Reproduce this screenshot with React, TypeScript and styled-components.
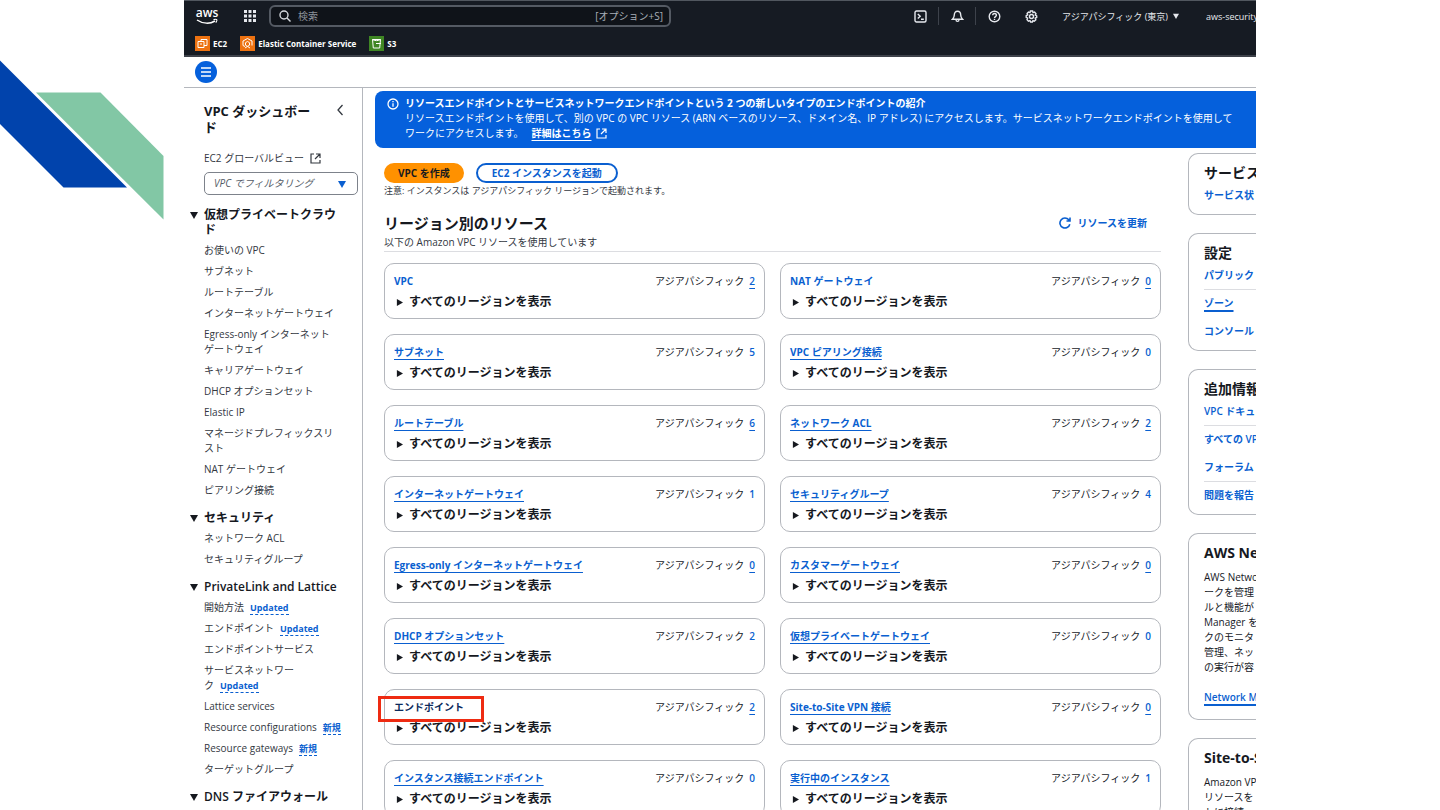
import React from "react";
import styled, { createGlobalStyle } from "styled-components";

const color = {
  ink: "#16191f",
  text: "#33383f",
  link: "#0a5fd0",
  nav: "#161b23",
  line: "#b4b7bd",
  soft: "#dcdde1",
};

const GlobalStyle = createGlobalStyle`
  *, *::before, *::after { box-sizing: border-box; }
  body {
    margin: 0;
    background: #fff;
    color: ${color.ink};
    font-family: "Open Sans", "Noto Sans CJK JP", sans-serif;
    font-size: 10px;
    line-height: 15px;
  }
  button, input, select { font: inherit; color: inherit; }
  button { cursor: pointer; }
  ul { list-style: none; margin: 0; padding: 0; }
  h1, h2, h3, p { margin: 0; }
  svg { display: block; flex: none; }
`;

/* ---------- slide ---------- */

const Slide = styled.div`
  display: grid;
  grid-template-columns: 184px minmax(0, 1fr) 184px;
  height: 100vh;
  overflow: hidden;
`;

const Console = styled.div`
  display: flex;
  flex-direction: column;
  min-width: 0;
  overflow: hidden;
`;

/* ---------- top navigation ---------- */

const TopNav = styled.header`
  background: ${color.nav};
  border-top: 1px solid #51575f;
  border-bottom: 2px solid #3d4149;
  color: #fff;
  flex: none;
`;

const NavRow = styled.div`
  display: flex;
  align-items: center;
  height: 30px;
  padding-left: 11px;
`;

const LogoLink = styled.a`
  color: #fff;
`;

const IconButton = styled.button`
  display: flex;
  align-items: center;
  justify-content: center;
  padding: 0;
  border: 0;
  background: none;
  color: #e6e9ee;
`;

const AppsButton = styled(IconButton)`
  margin: 0 13px 0 25px;
`;

const SearchBox = styled.label`
  display: flex;
  align-items: center;
  gap: 7px;
  flex: 0 1 402px;
  min-width: 0;
  height: 22px;
  padding: 0 6px 0 8px;
  border: 2px solid #545a63;
  border-radius: 6px;
  background: #0f1319;
  color: #a9afb8;
`;

const SearchInput = styled.input`
  flex: 1;
  min-width: 0;
  padding: 0;
  border: 0;
  outline: 0;
  background: none;
  &::placeholder { color: #8b919a; opacity: 1; }
`;

const NavTools = styled.div`
  display: flex;
  align-items: center;
  margin-left: auto;
  flex: none;
`;

const ToolCell = styled.div<{ $divided?: boolean }>`
  display: flex;
  justify-content: center;
  width: 37px;
  height: 18px;
  border-right: 1px solid ${(p) => (p.$divided ? "#3d424b" : "transparent")};
`;

const RegionButton = styled(IconButton)`
  margin-left: 12px;
  gap: 5px;
  font-size: 9px;
`;

const AccountButton = styled(IconButton)`
  justify-content: flex-start;
  width: 50px;
  margin-left: 27px;
  font-size: 9px;
  overflow: hidden;
  white-space: nowrap;
`;

const Favorites = styled.nav`
  display: flex;
  align-items: center;
  gap: 13px;
  height: 24px;
  padding-left: 11px;
`;

const Favorite = styled.a`
  display: flex;
  align-items: center;
  gap: 3px;
  color: #fff;
  font-size: 8px;
  font-weight: 700;
  text-decoration: none;
`;

const ToggleBar = styled.div`
  display: flex;
  align-items: center;
  flex: none;
  height: 31px;
  padding-left: 11px;
  border-bottom: 1px solid ${color.line};
`;

const MenuButton = styled(IconButton)`
  width: 22px;
  height: 22px;
  border-radius: 50%;
  background: #0560dc;
  color: #fff;
`;

const Body = styled.div`
  display: grid;
  grid-template-columns: 179px minmax(0, 1fr);
  flex: 1;
  min-height: 0;
`;

/* ---------- side navigation ---------- */

const SideNav = styled.nav`
  border-right: 1px solid ${color.line};
  padding: 15px 4px 0 20px;
  overflow: hidden;
`;

const SideHead = styled.div`
  display: flex;
  justify-content: space-between;
  align-items: flex-start;
  padding-right: 14px;
`;

const SideTitle = styled.h1`
  width: 116px;
  font-size: 13px;
  line-height: 16px;
  font-weight: 700;
`;

const GlobalView = styled.a`
  display: flex;
  align-items: center;
  gap: 6px;
  margin-top: 16px;
  color: ${color.text};
  text-decoration: none;
`;

const FilterBox = styled.div`
  display: grid;
  align-items: center;
  margin-top: 6px;
  color: ${color.link};
  & > * { grid-area: 1 / 1; }
  & > svg { justify-self: end; margin-right: 12px; pointer-events: none; }
`;

const FilterSelect = styled.select`
  appearance: none;
  width: 100%;
  height: 23px;
  padding: 0 24px 0 9px;
  border: 1px solid #7d828b;
  border-radius: 5px;
  background: #fff;
  color: #545b66;
  font-style: italic;
`;

const NavSection = styled.section`
  margin-top: 12px;
`;

const SectionButton = styled.button`
  display: flex;
  align-items: baseline;
  gap: 6px;
  margin-left: -14px;
  width: 150px;
  padding: 0;
  border: 0;
  background: none;
  text-align: left;
  font-size: 12px;
  line-height: 15px;
  font-weight: 600;
`;

const NavList = styled.ul`
  display: flex;
  flex-direction: column;
  gap: 6px;
  width: 136px;
  margin-top: 6px;
`;

const NavItem = styled.a<{ $single?: boolean }>`
  display: block;
  color: ${color.text};
  text-decoration: none;
  white-space: ${(p) => (p.$single ? "nowrap" : "normal")};
`;

const KeepTogether = styled.span`
  white-space: nowrap;
`;

const Badge = styled.span`
  margin-left: 6px;
  border-bottom: 1px dashed ${color.link};
  color: ${color.link};
  font-size: 9px;
  line-height: 10px;
  font-weight: 700;
`;

/* ---------- main ---------- */

const Content = styled.div`
  padding-top: 3px;
  min-width: 0;
  overflow: hidden;
`;

const Banner = styled.section`
  display: flex;
  gap: 6px;
  margin-left: 12px;
  padding: 5px 0 7px 12px;
  border-radius: 8px 0 0 8px;
  background: #0560dc;
  color: #fff;
  white-space: nowrap;
  overflow: hidden;
  & > svg { margin-top: 2px; }
`;

const BannerTitle = styled.h2`
  font-size: 10px;
  line-height: 15px;
  font-weight: 700;
`;

const BannerLine = styled.p`
  display: flex;
  align-items: center;
  gap: 4px;
`;

const BannerLink = styled.a`
  margin-left: 4px;
  color: #fff;
  font-weight: 600;
  text-underline-offset: 3px;
`;

const Columns = styled.div`
  display: flex;
  gap: 27px;
  padding-left: 21px;
`;

const Main = styled.main`
  flex: 1;
  min-width: 0;
  padding-top: 15px;
`;

const Actions = styled.div`
  display: flex;
  gap: 12px;
`;

const PillButton = styled.button<{ $primary?: boolean }>`
  height: 20px;
  padding: 0 ${(p) => (p.$primary ? 12 : 14)}px;
  border: 2px solid ${(p) => (p.$primary ? "#ff9100" : color.link)};
  border-radius: 10px;
  background: ${(p) => (p.$primary ? "#ff9100" : "#fff")};
  color: ${(p) => (p.$primary ? color.ink : color.link)};
  line-height: 15px;
  font-weight: 700;
`;

const Note = styled.p`
  color: ${color.text};
  font-size: 9px;
`;

const ResourcesHead = styled.div`
  display: flex;
  justify-content: space-between;
  align-items: flex-start;
  margin-top: 15px;
  padding: 0 14px 1px 0;
  border-bottom: 1px solid ${color.soft};
`;

const ResourcesTitle = styled.h2`
  font-size: 15px;
  line-height: 20px;
  font-weight: 600;
`;

const ResourcesSub = styled.p`
  margin-top: 2px;
  color: ${color.text};
`;

const RefreshButton = styled(IconButton)`
  gap: 7px;
  height: 20px;
  color: ${color.link};
  font-weight: 700;
`;

const CardGrid = styled.div`
  display: grid;
  grid-template-columns: repeat(2, minmax(0, 1fr));
  gap: 15px;
  margin-top: 11px;
`;

const Card = styled.article`
  position: relative;
  padding: 10px 9px 8px;
  border: 1px solid ${color.line};
  border-radius: 10px;
`;

const CardRow = styled.div`
  display: flex;
  justify-content: space-between;
`;

const CardLink = styled.a<{ $underlined?: boolean; $visited?: boolean }>`
  color: ${(p) => (p.$visited ? "#0b2a5c" : color.link)};
  font-weight: 700;
  text-decoration: ${(p) => (p.$underlined ? "underline" : "none")};
  text-underline-offset: 3px;
`;

const CountLink = styled.a<{ $underlined?: boolean }>`
  margin-left: 5px;
  color: ${color.link};
  font-weight: 600;
  text-decoration: ${(p) => (p.$underlined ? "underline" : "none")};
  text-underline-offset: 3px;
`;

const ExpandButton = styled.button`
  display: flex;
  align-items: center;
  gap: 6px;
  margin-top: 5px;
  padding: 0 0 0 2px;
  border: 0;
  background: none;
  font-size: 12px;
  line-height: 16px;
  font-weight: 600;
`;

const Highlight = styled.div`
  position: absolute;
  top: 6px;
  left: -7px;
  width: 106px;
  height: 26px;
  border: 3px solid #ee2b12;
  pointer-events: none;
`;

/* ---------- right column ---------- */

const Aside = styled.aside`
  display: flex;
  flex-direction: column;
  gap: 18px;
  flex: none;
  width: 68px;
  padding-top: 5px;
  overflow: hidden;
  white-space: nowrap;
`;

const Panel = styled.section<{ $prose?: boolean }>`
  flex: none;
  padding: 10px 0 ${(p) => (p.$prose ? 14 : 5)}px 15px;
  border: 1px solid ${color.line};
  border-right: 0;
  border-radius: 10px 0 0 10px;
`;

const PanelTitle = styled.h3`
  font-size: 14px;
  line-height: 18px;
  font-weight: 700;
`;

const PanelItem = styled.li<{ $ruled?: boolean }>`
  padding: 6px 0;
  border-bottom: 1px solid ${(p) => (p.$ruled ? color.soft : "transparent")};
  &:last-child { border-bottom: 0; }
`;

const PanelLink = styled.a<{ $underlined?: boolean }>`
  color: ${color.link};
  font-weight: 600;
  text-decoration: ${(p) => (p.$underlined ? "underline" : "none")};
  text-decoration-thickness: 2px;
  text-underline-offset: 3px;
`;

const PanelText = styled.p`
  margin: 8px 0 15px;
  white-space: pre;
`;

/* ---------- icons ---------- */

const Triangle = ({ dir, size = 8 }: { dir: "down" | "right"; size?: number }) => (
  <svg width={size} height={size} viewBox="0 0 8 8" fill="currentColor" aria-hidden>
    <path d={dir === "down" ? "M0 1h8L4 8z" : "M1 0v8l7-4z"} />
  </svg>
);

const ExternalIcon = () => (
  <svg width="11" height="11" viewBox="0 0 11 11" fill="none" stroke="currentColor" strokeWidth="1.2" aria-hidden>
    <path d="M4 1H1v9h9V7M6 1h4v4M10 1 5 6" />
  </svg>
);

const AwsLogo = () => (
  <svg width="24" height="20" viewBox="0 0 24 20" role="img" aria-label="AWS" overflow="visible">
    <text x="12" y="11" textAnchor="middle" fontSize="12" fontWeight="600" fill="#fff">
      aws
    </text>
    <path d="M2 14c6 4 13 4 18 1" fill="none" stroke="#fff" strokeWidth="1.5" />
    <path d="M18.500 13.600c1.500-.4 3-.4 3.300 0s-.3 2-1 3" fill="none" stroke="#fff" strokeWidth="1.1" />
  </svg>
);

const AppsIcon = () => (
  <svg width="12" height="12" viewBox="0 0 12 12" fill="currentColor" aria-hidden>
    {[0, 4.5, 9].map((y) =>
      [0, 4.5, 9].map((x) => <rect key={`${x}-${y}`} x={x} y={y} width="3" height="3" />)
    )}
  </svg>
);

const SearchIcon = () => (
  <svg width="12" height="12" viewBox="0 0 12 12" fill="none" stroke="#d5d9de" strokeWidth="1.4" aria-hidden>
    <circle cx="5" cy="5" r="4" />
    <path d="m8 8 3.500 3.500" />
  </svg>
);

const toolIcons: Record<string, React.ReactNode> = {
  CloudShell: (
    <>
      <rect x="1" y="1" width="11" height="11" rx="1.5" />
      <path d="m3.800 4 2.400 2.300-2.400 2.300M7 9.300h2.800" />
    </>
  ),
  通知: <path d="M6.500 1.200C4.300 1.200 3.300 3 3.300 5c0 2-.6 2.900-1.800 4.200h10C10.300 7.900 9.700 7 9.700 5c0-2-1-3.800-3.200-3.800zM5 9.500c0 2.500 3 2.500 3 0" />,
  ヘルプ: (
    <>
      <circle cx="6.5" cy="6.5" r="5.3" />
      <path d="M4.700 5.300c0-2.400 3.700-2.400 3.700 0 0 1.300-1.900 1.300-1.900 2.600M6.500 8.800v1.200" />
    </>
  ),
  設定: (
    <>
      <path d="M5.400 1h2.200l.4 1.600 1.600-.5 1.400 1.700-.8 1.300 1.500.9v1.500l-1.500.6.6 1.600-1.500 1.500-1.400-.6-.5 1.400H5.600L5 10.600l-1.600.6L2 9.700l.6-1.600-1.400-.7V5.700l1.500-.7-.6-1.500L3.500 2l1.500.6z" />
      <circle cx="6.5" cy="6.5" r="2" />
    </>
  ),
};

const ToolIcon = ({ name }: { name: string }) => (
  <svg width="13" height="13" viewBox="0 0 13 13" fill="none" stroke="currentColor" strokeWidth="1.4" aria-hidden>
    {toolIcons[name]}
  </svg>
);

const ServiceIcon = ({ kind }: { kind: "ec2" | "ecs" | "s3" }) => (
  <svg width="15" height="15" viewBox="0 0 15 15" fill="none" stroke="#fff" strokeWidth="1" aria-hidden>
    <rect width="15" height="15" fill={kind === "s3" ? "#3f8624" : "#ed7211"} stroke="none" />
    {kind === "ec2" && <path d="M3 5.500h6v6H3zM6 5.500v-2h6v6H9M5 8h2" />}
    {kind === "ecs" && <path d="M7.500 2.500 12 5v4.500M7.500 2.500 3 5v4.500l2 1M7.500 5.500l2 1.200v2.500l-2 1.200-2-1.200V6.700zM5 12l2.500-1.600L10 12" />}
    {kind === "s3" && <path d="M3.500 3.500h8l-.8 8.500H4.300zM3.500 3.500c2 1.500 6 1.500 8 0M7 7.500h5" />}
  </svg>
);

const Stripes = () => (
  <svg width="184" height="220" viewBox="0 0 184 220" aria-hidden>
    <path d="M0 60.500 127 187.500H63.500L0 124z" fill="#0143ac" />
    <path d="M36 92.500h64.500l63 63.500v63.500z" fill="#82c7a5" />
  </svg>
);

/* ---------- data ---------- */

interface NavEntry {
  label: string;
  tail?: string;
  badge?: string;
}

const sections: { title: string; items: NavEntry[] }[] = [
  {
    title: "仮想プライベートクラウド",
    items: [
      { label: "お使いの VPC" },
      { label: "サブネット" },
      { label: "ルートテーブル" },
      { label: "インターネットゲートウェイ" },
      { label: "Egress-only インターネット", tail: "ゲートウェイ" },
      { label: "キャリアゲートウェイ" },
      { label: "DHCP オプションセット" },
      { label: "Elastic IP" },
      { label: "マネージドプレフィックスリスト" },
      { label: "NAT ゲートウェイ" },
      { label: "ピアリング接続" },
    ],
  },
  { title: "セキュリティ", items: [{ label: "ネットワーク ACL" }, { label: "セキュリティグループ" }] },
  {
    title: "PrivateLink and Lattice",
    items: [
      { label: "開始方法", badge: "Updated" },
      { label: "エンドポイント", badge: "Updated" },
      { label: "エンドポイントサービス" },
      { label: "サービスネットワー", tail: "ク", badge: "Updated" },
      { label: "Lattice services" },
      { label: "Resource configurations", badge: "新規" },
      { label: "Resource gateways", badge: "新規" },
      { label: "ターゲットグループ" },
    ],
  },
  { title: "DNS ファイアウォール", items: [] },
];

interface Resource {
  name: string;
  count: number;
  plain?: boolean;
  plainCount?: boolean;
  marked?: boolean;
}

const resources: Resource[] = [
  { name: "VPC", count: 2, plain: true },
  { name: "NAT ゲートウェイ", count: 0, plain: true },
  { name: "サブネット", count: 5, plainCount: true },
  { name: "VPC ピアリング接続", count: 0, plainCount: true },
  { name: "ルートテーブル", count: 6 },
  { name: "ネットワーク ACL", count: 2 },
  { name: "インターネットゲートウェイ", count: 1, plainCount: true },
  { name: "セキュリティグループ", count: 4, plainCount: true },
  { name: "Egress-only インターネットゲートウェイ", count: 0 },
  { name: "カスタマーゲートウェイ", count: 0 },
  { name: "DHCP オプションセット", count: 2, plainCount: true },
  { name: "仮想プライベートゲートウェイ", count: 0, plainCount: true },
  { name: "エンドポイント", count: 2, plain: true, marked: true },
  { name: "Site-to-Site VPN 接続", count: 0 },
  { name: "インスタンス接続エンドポイント", count: 0, plainCount: true },
  { name: "実行中のインスタンス", count: 1, plainCount: true },
];

interface PanelEntry {
  label: string;
  ruled?: boolean;
  underlined?: boolean;
}

const linkPanels: { title: string; links: PanelEntry[] }[] = [
  { title: "サービス", links: [{ label: "サービス状" }] },
  {
    title: "設定",
    links: [{ label: "パブリック", ruled: true }, { label: "ゾーン", underlined: true }, { label: "コンソール" }],
  },
  {
    title: "追加情報",
    links: [
      { label: "VPC ドキュ", ruled: true },
      { label: "すべての VPC" },
      { label: "フォーラム", ruled: true },
      { label: "問題を報告" },
    ],
  },
];

const networkText = [
  "AWS Network",
  "ークを管理",
  "ルと機能が",
  "Manager を",
  "クのモニタ",
  "管理、ネッ",
  "の実行が容",
].join("\n");

const vpnText = ["Amazon VPC", "リソースを", "トに接続"].join("\n");

/* ---------- page ---------- */

const tools = ["CloudShell", "通知", "ヘルプ", "設定"];

export default function App() {
  return (
    <Slide>
      <GlobalStyle />
      <Stripes />
      <Console>
        <TopNav>
          <NavRow>
            <LogoLink href="#home">
              <AwsLogo />
            </LogoLink>
            <AppsButton aria-label="サービス">
              <AppsIcon />
            </AppsButton>
            <SearchBox>
              <SearchIcon />
              <SearchInput type="search" placeholder="検索" aria-label="検索" />
              <span>[オプション+S]</span>
            </SearchBox>
            <NavTools>
              {tools.map((name, i) => (
                <ToolCell key={name} $divided={i < 2}>
                  <IconButton aria-label={name}>
                    <ToolIcon name={name} />
                  </IconButton>
                </ToolCell>
              ))}
              <RegionButton>
                アジアパシフィック (東京)
                <Triangle dir="down" size={6} />
              </RegionButton>
              <AccountButton>aws-security</AccountButton>
            </NavTools>
          </NavRow>
          <Favorites>
            <Favorite href="#ec2">
              <ServiceIcon kind="ec2" />
              EC2
            </Favorite>
            <Favorite href="#ecs">
              <ServiceIcon kind="ecs" />
              Elastic Container Service
            </Favorite>
            <Favorite href="#s3">
              <ServiceIcon kind="s3" />
              S3
            </Favorite>
          </Favorites>
        </TopNav>

        <ToggleBar>
          <MenuButton aria-label="メニュー">
            <svg width="12" height="12" viewBox="0 0 12 12" stroke="currentColor" strokeWidth="1.4" aria-hidden>
              <path d="M1 2h10M1 6h10M1 10h10" />
            </svg>
          </MenuButton>
        </ToggleBar>

        <Body>
          <SideNav>
            <SideHead>
              <SideTitle>VPC ダッシュボード</SideTitle>
              <IconButton aria-label="閉じる">
                <svg width="8" height="14" viewBox="0 0 8 14" fill="none" stroke={color.text} strokeWidth="1.3">
                  <path d="M6.500 2 2 7l4.500 5" />
                </svg>
              </IconButton>
            </SideHead>
            <GlobalView href="#global">
              EC2 グローバルビュー
              <ExternalIcon />
            </GlobalView>
            <FilterBox>
              <FilterSelect aria-label="VPC でフィルタリング">
                <option>VPC でフィルタリング</option>
              </FilterSelect>
              <Triangle dir="down" />
            </FilterBox>
            {sections.map((section) => (
              <NavSection key={section.title}>
                <SectionButton>
                  <Triangle dir="down" />
                  {section.title}
                </SectionButton>
                <NavList>
                  {section.items.map((item) => (
                    <li key={item.label}>
                      <NavItem href="#nav" $single={!!item.badge && !item.tail}>
                        {item.label}
                        {item.tail && <wbr />}
                        <KeepTogether>
                          {item.tail}
                          {item.badge && <Badge>{item.badge}</Badge>}
                        </KeepTogether>
                      </NavItem>
                    </li>
                  ))}
                </NavList>
              </NavSection>
            ))}
          </SideNav>

          <Content>
            <Banner>
              <svg width="12" height="12" viewBox="0 0 12 12" fill="none" stroke="currentColor" strokeWidth="1.3">
                <circle cx="6" cy="6" r="5" />
                <path d="M6 5.300v3.500M6 3v1.300" />
              </svg>
              <div>
                <BannerTitle>
                  リソースエンドポイントとサービスネットワークエンドポイントという 2 つの新しいタイプのエンドポイントの紹介
                </BannerTitle>
                <BannerLine>
                  リソースエンドポイントを使用して、別の VPC の VPC リソース (ARN ベースのリソース、ドメイン名、IP
                  アドレス) にアクセスします。サービスネットワークエンドポイントを使用して
                </BannerLine>
                <BannerLine>
                  ワークにアクセスします。
                  <BannerLink href="#details">詳細はこちら</BannerLink>
                  <ExternalIcon />
                </BannerLine>
              </div>
            </Banner>

            <Columns>
              <Main>
                <Actions>
                  <PillButton $primary>VPC を作成</PillButton>
                  <PillButton>EC2 インスタンスを起動</PillButton>
                </Actions>
                <Note>注意: インスタンスは アジアパシフィック リージョンで起動されます。</Note>
                <ResourcesHead>
                  <div>
                    <ResourcesTitle>リージョン別のリソース</ResourcesTitle>
                    <ResourcesSub>以下の Amazon VPC リソースを使用しています</ResourcesSub>
                  </div>
                  <RefreshButton>
                    <svg width="12" height="12" viewBox="0 0 12 12" fill="none" stroke="currentColor" strokeWidth="1.6">
                      <path d="M10.800 7.200A5 5 0 1 1 9.800 2.800L11 4M11 .5V4H7.500" />
                    </svg>
                    リソースを更新
                  </RefreshButton>
                </ResourcesHead>
                <CardGrid>
                  {resources.map((r) => (
                    <Card key={r.name}>
                      <CardRow>
                        <CardLink href="#resource" $underlined={!r.plain} $visited={r.marked}>
                          {r.name}
                        </CardLink>
                        <span>
                          アジアパシフィック
                          <CountLink href="#count" $underlined={!r.plainCount}>
                            {r.count}
                          </CountLink>
                        </span>
                      </CardRow>
                      <ExpandButton>
                        <Triangle dir="right" size={7} />
                        すべてのリージョンを表示
                      </ExpandButton>
                      {r.marked && <Highlight />}
                    </Card>
                  ))}
                </CardGrid>
              </Main>

              <Aside>
                {linkPanels.map((panel) => (
                  <Panel key={panel.title}>
                    <PanelTitle>{panel.title}</PanelTitle>
                    <ul>
                      {panel.links.map((link) => (
                        <PanelItem key={link.label} $ruled={link.ruled}>
                          <PanelLink href="#link" $underlined={link.underlined}>
                            {link.label}
                          </PanelLink>
                        </PanelItem>
                      ))}
                    </ul>
                  </Panel>
                ))}
                <Panel $prose>
                  <PanelTitle>AWS Network</PanelTitle>
                  <PanelText>{networkText}</PanelText>
                  <PanelLink href="#manager" $underlined>
                    Network Manager
                  </PanelLink>
                </Panel>
                <Panel $prose>
                  <PanelTitle>Site-to-Site</PanelTitle>
                  <PanelText>{vpnText}</PanelText>
                </Panel>
              </Aside>
            </Columns>
          </Content>
        </Body>
      </Console>
    </Slide>
  );
}
